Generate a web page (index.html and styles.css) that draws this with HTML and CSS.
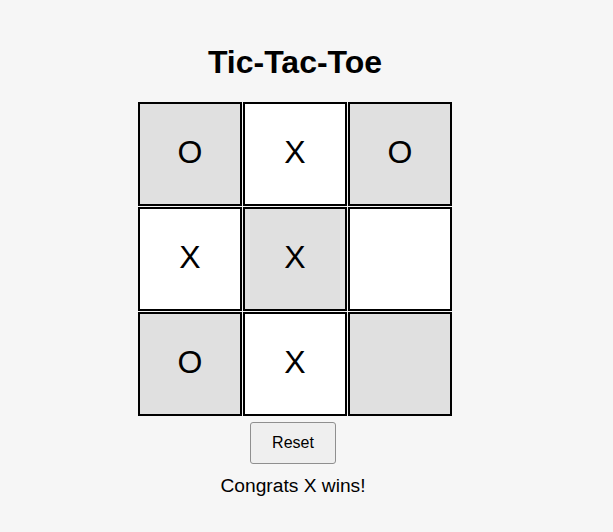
FILE: index.html
```html
<!DOCTYPE html>
<html lang="en">
<head>
<meta charset="utf-8">
<title>Tic-Tac-Toe</title>
<link rel="stylesheet" href="styles.css">
</head>
<body>
<div class="app">
  <h1 class="title">Tic-Tac-Toe</h1>
  <div class="board">
    <div class="cell dark">O</div>
    <div class="cell light">X</div>
    <div class="cell dark">O</div>
    <div class="cell light">X</div>
    <div class="cell dark">X</div>
    <div class="cell light"></div>
    <div class="cell dark">O</div>
    <div class="cell light">X</div>
    <div class="cell dark"></div>
  </div>
  <button class="reset" type="button">Reset</button>
  <p class="status">Congrats X wins!</p>
</div>
</body>
</html>
```
FILE: styles.css
```css
html, body {
  background: #f6f6f6;
}
body {
  margin: 8px;
  font-family: "Liberation Sans", Arial, sans-serif;
  color: #000;
}
.app {
  width: 574px;
  padding-top: 15px;
  display: flex;
  flex-direction: column;
  align-items: center;
}
.title {
  font-size: 32px;
  font-weight: bold;
  line-height: 36.8px;
  margin: 21.4px 0 21px;
}
.board {
  display: grid;
  grid-template-columns: repeat(3, 104px);
  grid-auto-rows: 104px;
  gap: 1px;
}
.cell {
  box-sizing: border-box;
  border: 2px solid #000;
  padding-bottom: 4px;
  display: flex;
  align-items: center;
  justify-content: center;
  font-size: 32px;
  line-height: 37px;
}
.dark { background: #e0e0e0; }
.light { background: #ffffff; }
.reset {
  margin: 6px 4px 0 0;
  font-family: "Liberation Sans", Arial, sans-serif;
  font-size: 16px;
  line-height: 18px;
  padding: 11px 21px;
  background: #efefef;
  border: 1px solid #8f8f8f;
  border-radius: 3px;
  color: #000;
}
.status {
  margin: 11px 4px 0 0;
  font-size: 19.2px;
  line-height: 22px;
}
```
